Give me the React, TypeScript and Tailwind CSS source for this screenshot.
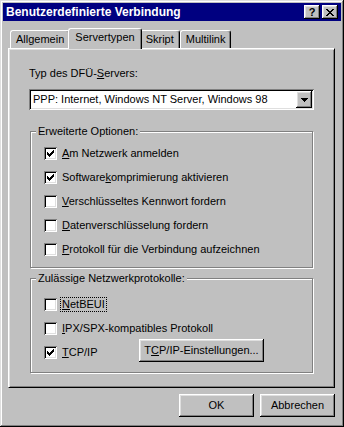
import type { ReactNode } from "react";

const raised =
  "shadow-[inset_-1px_-1px_#000,inset_1px_1px_#fff,inset_-2px_-2px_#808080,inset_2px_2px_#dfdfdf]";
const sunken =
  "shadow-[inset_1px_1px_#808080,inset_-1px_-1px_#fff,inset_2px_2px_#000,inset_-2px_-2px_#dfdfdf]";

const Key = ({ children }: { children: ReactNode }) => (
  <span className="underline underline-offset-[1px]">{children}</span>
);

const TitleButton = ({ children }: { children: ReactNode }) => (
  <div
    className={`flex h-[14px] w-[16px] items-center justify-center bg-[#c0c0c0] text-[11px] font-bold leading-none text-black ${raised}`}
  >
    {children}
  </div>
);

const Checkbox = ({ checked }: { checked?: boolean }) => (
  <div className={`flex h-[13px] w-[13px] shrink-0 items-center justify-center bg-white ${sunken}`}>
    {checked && (
      <svg width="7" height="7" viewBox="0 0 7 7">
        <path d="M0 2h1v1h1v1h1V3h1V2h1V1h1V0h1v3H6v1H5v1H4v1H3v1H2V6H1V5H0z" fill="#000" />
      </svg>
    )}
  </div>
);

const CheckRow = ({
  checked,
  focused,
  children,
}: {
  checked?: boolean;
  focused?: boolean;
  children: ReactNode;
}) => (
  <div className="flex h-[24px] items-center gap-[4px]">
    <Checkbox checked={checked} />
    <span className={focused ? "px-[1px] outline-1 outline-dotted outline-black" : "px-[1px]"}>
      {children}
    </span>
  </div>
);

const GroupBox = ({
  title,
  className,
  children,
}: {
  title: string;
  className: string;
  children: ReactNode;
}) => (
  <div
    className={`relative border border-[#808080] shadow-[1px_1px_0_#fff,inset_1px_1px_0_#fff] pl-[13px] ${className}`}
  >
    <span className="absolute -top-[8px] left-[5px] bg-[#c0c0c0] px-[2px] leading-[14px]">
      {title}
    </span>
    {children}
  </div>
);

const tabs = ["Allgemein", "Servertypen", "Skript", "Multilink"];

const Tabs = () => (
  <div className="flex h-[20px] items-end pl-[2px]">
    {tabs.map((tab) =>
      tab === "Servertypen" ? (
        <div
          key={tab}
          className="relative z-10 -mx-[2px] -mb-[1px] flex h-[21px] items-start rounded-t-[3px] border-l border-t border-r border-l-white border-t-white border-r-black bg-[#c0c0c0] px-[6px] pt-[2px] shadow-[inset_-1px_0_#808080]"
        >
          {tab}
        </div>
      ) : (
        <div
          key={tab}
          className="flex h-[18px] items-start rounded-t-[3px] border-l border-t border-r border-l-white border-t-white border-r-black px-[5px] pt-[2px] shadow-[inset_-1px_0_#808080]"
        >
          {tab}
        </div>
      ),
    )}
  </div>
);

const Select = () => (
  <div className={`flex h-[21px] items-center bg-white pl-[4px] pr-[2px] ${sunken}`}>
    <span className="flex-1">PPP: Internet, Windows NT Server, Windows 98</span>
    <div className={`flex h-[17px] w-[16px] items-center justify-center bg-[#c0c0c0] ${raised}`}>
      <svg width="7" height="4" viewBox="0 0 7 4">
        <path d="M0 0h7v1H6v1H5v1H4v1H3V3H2V2H1V1H0z" fill="#000" />
      </svg>
    </div>
  </div>
);

const Button = ({ children, className = "" }: { children: ReactNode; className?: string }) => (
  <div className={`flex h-[23px] items-center justify-center bg-[#c0c0c0] ${raised} ${className}`}>
    {children}
  </div>
);

export default function App() {
  return (
    <div
      className={`h-[427px] w-[344px] bg-[#c0c0c0] p-[3px] font-['Liberation_Sans',Arial,sans-serif] text-[11px] leading-[13px] text-black shadow-[inset_-1px_-1px_#000,inset_1px_1px_#dfdfdf,inset_-2px_-2px_#808080,inset_2px_2px_#fff]`}
    >
      <div className="flex h-[18px] items-center justify-between bg-[#000080] pl-[3px] pr-[3px]">
        <span className="text-[12px] font-bold text-white">Benutzerdefinierte Verbindung</span>
        <div className="flex gap-[2px]">
          <TitleButton>?</TitleButton>
          <TitleButton>
            <svg width="8" height="7" viewBox="0 0 8 7">
              <path d="M0 0h2v1h1v1h2V1h1V0h2v1H7v1H6v1H5v1h1v1h1v1h1v1H6V6H5V5H3v1H2v1H0V6h1V5h1V4h1V3H2V2H1V1H0z" fill="#000" />
            </svg>
          </TitleButton>
        </div>
      </div>

      <div className="mt-[7px] pl-[5px] pr-[6px]">
        <Tabs />
        <div className="h-[340px] border border-l-white border-t-white border-r-black border-b-black px-[20px] pt-[18px] shadow-[inset_1px_1px_#dfdfdf,inset_-1px_-1px_#808080]">
          <div>
            Typ des DFÜ-<Key>S</Key>ervers:
          </div>
          <div className="mt-[9px]">
            <Select />
          </div>

          <GroupBox title="Erweiterte Optionen:" className="mx-[1px] mt-[21px] pb-[6px] pt-[9px]">
            <CheckRow checked>
              <Key>A</Key>m Netzwerk anmelden
            </CheckRow>
            <CheckRow checked>
              Software<Key>k</Key>omprimierung aktivieren
            </CheckRow>
            <CheckRow>
              <Key>V</Key>erschlüsseltes Kennwort fordern
            </CheckRow>
            <CheckRow>
              <Key>D</Key>atenverschlüsselung fordern
            </CheckRow>
            <CheckRow>
              <Key>P</Key>rotokoll für die Verbindung aufzeichnen
            </CheckRow>
          </GroupBox>

          <GroupBox title="Zulässige Netzwerkprotokolle:" className="mx-[1px] mt-[10px] pb-[8px] pt-[13px]">
            <CheckRow focused>
              <Key>N</Key>etBEUI
            </CheckRow>
            <CheckRow>
              <Key>I</Key>PX/SPX-kompatibles Protokoll
            </CheckRow>
            <div className="flex h-[24px] items-center">
              <div className="w-[95px]">
                <CheckRow checked>
                  <Key>T</Key>CP/IP
                </CheckRow>
              </div>
              <Button className="-mt-[3px] w-[125px]">
                T<Key>C</Key>P/IP-Einstellungen...
              </Button>
            </div>
          </GroupBox>
        </div>
      </div>

      <div className="mt-[6px] flex justify-end gap-[6px] pr-[6px]">
        <Button className="w-[75px]">OK</Button>
        <Button className="w-[75px]">Abbrechen</Button>
      </div>
    </div>
  );
}
